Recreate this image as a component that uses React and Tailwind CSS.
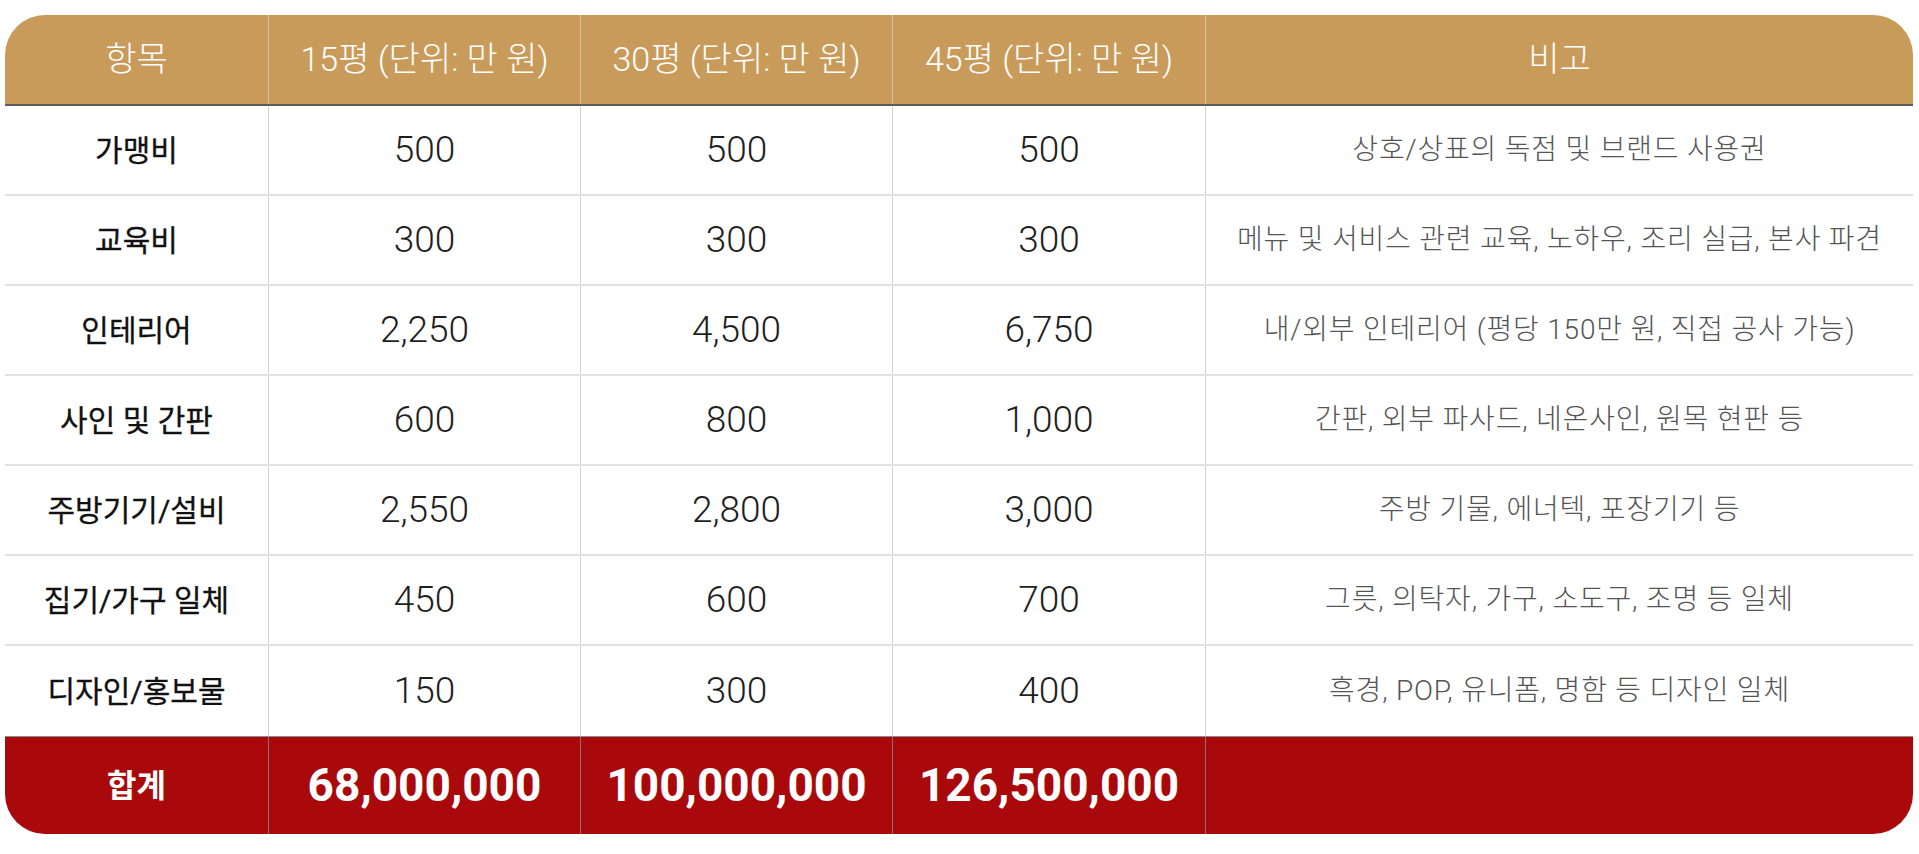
import React from "react";

const cols = "grid grid-cols-[264px_312px_312px_313px_1fr]";

const rows = [
  ["가맹비", "500", "500", "500", "상호/상표의 독점 및 브랜드 사용권"],
  ["교육비", "300", "300", "300", "메뉴 및 서비스 관련 교육, 노하우, 조리 실급, 본사 파견"],
  ["인테리어", "2,250", "4,500", "6,750", "내/외부 인테리어 (평당 150만 원, 직접 공사 가능)"],
  ["사인 및 간판", "600", "800", "1,000", "간판, 외부 파사드, 네온사인, 원목 현판 등"],
  ["주방기기/설비", "2,550", "2,800", "3,000", "주방 기물, 에너텍, 포장기기 등"],
  ["집기/가구 일체", "450", "600", "700", "그릇, 의탁자, 가구, 소도구, 조명 등 일체"],
  ["디자인/홍보물", "150", "300", "400", "흑경, POP, 유니폼, 명함 등 디자인 일체"],
];

const headers = ["항목", "15평 (단위: 만 원)", "30평 (단위: 만 원)", "45평 (단위: 만 원)", "비고"];
const totals = ["합계", "68,000,000", "100,000,000", "126,500,000", ""];

export default function App() {
  return (
    <div className="w-[1919px] h-[854px] bg-white pl-[5px] pr-[6px] pt-[15px] font-['Roboto','Noto_Sans_CJK_KR',sans-serif]">
      <div className="rounded-[40px] overflow-hidden">
        <div className={`${cols} h-[91px] bg-[#c99b5b] border-b-2 border-[#5f5d5a]`}>
          {headers.map((h, i) => (
            <div
              key={i}
              className={`flex items-center justify-center text-white text-[34px] font-light ${i < 4 ? "border-r border-[#d9c7ab]" : ""}`}
            >
              {h}
            </div>
          ))}
        </div>
        {rows.map((r, ri) => (
          <div
            key={ri}
            className={`${cols} h-[90px] bg-white ${ri < rows.length - 1 ? "border-b-2 border-[#e1e1e1]" : ""}`}
          >
            <div className="flex items-center justify-center border-r border-[#d4d4d4] text-[30px] font-normal text-[#111111] [-webkit-text-stroke:0.3px_#111111]">
              {r[0]}
            </div>
            {[1, 2, 3].map((c) => (
              <div
                key={c}
                className="flex items-center justify-center border-r border-[#d4d4d4] text-[37px] font-light text-[#1f1f1f]"
              >
                {r[c]}
              </div>
            ))}
            <div className="flex items-center justify-center text-[28px] font-light tracking-[0.8px] text-[#555555]">
              {r[4]}
            </div>
          </div>
        ))}
        <div className={`${cols} h-[98px] bg-[#a9090b] border-t border-[#8c8c8c]`}>
          {totals.map((t, i) => (
            <div
              key={i}
              className={`flex items-center justify-center text-white font-bold ${i === 0 ? "text-[32px]" : "text-[46px]"} ${i < 4 ? "border-r border-[#8a7070]" : ""}`}
            >
              {t}
            </div>
          ))}
        </div>
      </div>
    </div>
  );
}
